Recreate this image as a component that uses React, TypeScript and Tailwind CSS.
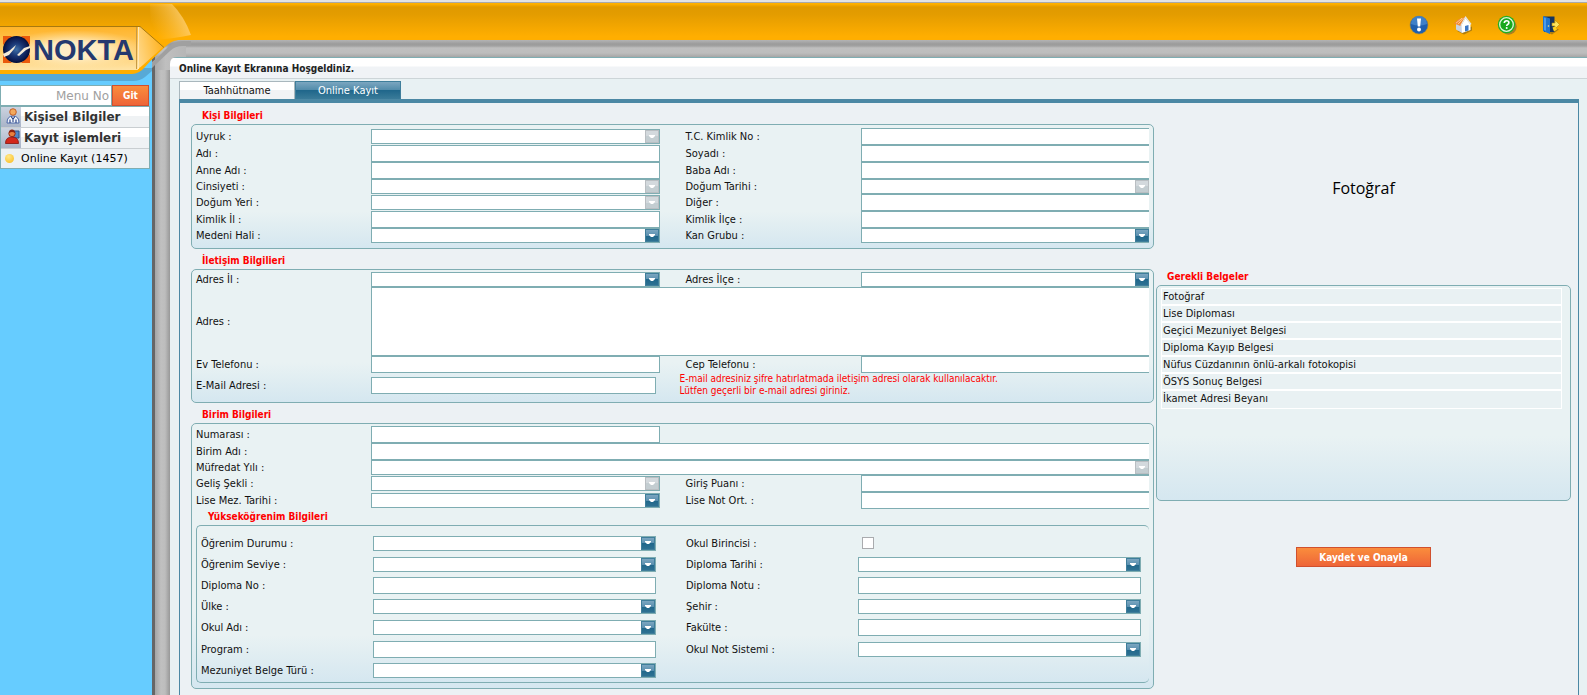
import type { ReactNode } from 'react';
import clsx from 'clsx';

type FieldKind = 'text' | 'select' | 'checkbox' | 'textarea';

interface FieldDef {
    id: string;
    label: string;
    kind?: FieldKind;
    disabled?: boolean;
    wide?: boolean;
}

const personFields: FieldDef[] = [
    { id: 'uyruk', label: 'Uyruk :', kind: 'select', disabled: true },
    { id: 'tc-kimlik', label: 'T.C. Kimlik No :' },
    { id: 'adi', label: 'Adı :' },
    { id: 'soyadi', label: 'Soyadı :' },
    { id: 'anne-adi', label: 'Anne Adı :' },
    { id: 'baba-adi', label: 'Baba Adı :' },
    { id: 'cinsiyet', label: 'Cinsiyeti :', kind: 'select', disabled: true },
    { id: 'dogum-tarihi', label: 'Doğum Tarihi :', kind: 'select', disabled: true },
    { id: 'dogum-yeri', label: 'Doğum Yeri :', kind: 'select', disabled: true },
    { id: 'diger', label: 'Diğer :' },
    { id: 'kimlik-il', label: 'Kimlik İl :' },
    { id: 'kimlik-ilce', label: 'Kimlik İlçe :' },
    { id: 'medeni-hali', label: 'Medeni Hali :', kind: 'select' },
    { id: 'kan-grubu', label: 'Kan Grubu :', kind: 'select' },
];

const contactFields: FieldDef[] = [
    { id: 'adres-il', label: 'Adres İl :', kind: 'select' },
    { id: 'adres-ilce', label: 'Adres İlçe :', kind: 'select' },
    { id: 'adres', label: 'Adres :', kind: 'textarea', wide: true },
    { id: 'ev-tel', label: 'Ev Telefonu :' },
    { id: 'cep-tel', label: 'Cep Telefonu :' },
];

const unitFields: FieldDef[] = [
    { id: 'birim-adi', label: 'Birim Adı :', wide: true },
    { id: 'mufredat', label: 'Müfredat Yılı :', kind: 'select', disabled: true, wide: true },
    { id: 'gelis', label: 'Geliş Şekli :', kind: 'select', disabled: true },
    { id: 'giris-puani', label: 'Giriş Puanı :' },
    { id: 'lise-mez', label: 'Lise Mez. Tarihi :', kind: 'select' },
    { id: 'lise-not', label: 'Lise Not Ort. :' },
];

const higherEdFields: FieldDef[] = [
    { id: 'ogrenim-durumu', label: 'Öğrenim Durumu :', kind: 'select' },
    { id: 'okul-birincisi', label: 'Okul Birincisi :', kind: 'checkbox' },
    { id: 'ogrenim-seviye', label: 'Öğrenim Seviye :', kind: 'select' },
    { id: 'diploma-tarihi', label: 'Diploma Tarihi :', kind: 'select' },
    { id: 'diploma-no', label: 'Diploma No :' },
    { id: 'diploma-notu', label: 'Diploma Notu :' },
    { id: 'ulke', label: 'Ülke :', kind: 'select' },
    { id: 'sehir', label: 'Şehir :', kind: 'select' },
    { id: 'okul-adi', label: 'Okul Adı :', kind: 'select' },
    { id: 'fakulte', label: 'Fakülte :' },
    { id: 'program', label: 'Program :' },
    { id: 'not-sistemi', label: 'Okul Not Sistemi :', kind: 'select' },
    { id: 'belge-turu', label: 'Mezuniyet Belge Türü :', kind: 'select' },
];

const requiredDocs = [
    'Fotoğraf',
    'Lise Diploması',
    'Geçici Mezuniyet Belgesi',
    'Diploma Kayıp Belgesi',
    'Nüfus Cüzdanının önlü-arkalı fotokopisi',
    'ÖSYS Sonuç Belgesi',
    'İkamet Adresi Beyanı',
];

const boxClass = 'rounded-[5px] border border-[#7fadb2] bg-[linear-gradient(to_bottom,#e9f2f3_70%,#d5e7f0)]';
const gridClass = 'grid grid-cols-[175px_1fr_201px_1fr] items-center';

const Control = ({ field, open }: { field: FieldDef; open?: boolean }) => {
    const { id, kind = 'text', disabled, wide } = field;
    const border = clsx('border border-[#7fadb2] bg-white', open && 'border-r-0');
    const span = wide && 'col-span-3';

    if (kind === 'checkbox') {
        return (
            <div className="flex h-[18px] items-center pl-1">
                <input id={id} type="checkbox" className="size-3 appearance-none border border-[#a9abae] bg-white checked:bg-[#2b6d8d]" />
            </div>
        );
    }
    if (kind === 'textarea') {
        return <textarea id={id} className={clsx('block h-[69px] w-full resize-none px-1 outline-none', border, span)} />;
    }
    if (kind === 'select') {
        return (
            <div className={clsx('relative h-[15px]', border, span)}>
                <select id={id} disabled={disabled} className="block h-full w-full appearance-none bg-transparent px-1 outline-none">
                    <option value=""></option>
                </select>
                <span
                    className={clsx(
                        'pointer-events-none absolute top-0 right-0 flex h-[13px] w-[14px] items-center justify-center border',
                        disabled
                            ? 'border-[#b9bec2] bg-[linear-gradient(to_bottom,#d3d9dd_50%,#c3cdd1_50%)]'
                            : 'border-[#3f7e9b] bg-[linear-gradient(to_bottom,#7ba6c0,#5b90b0_50%,#20678b_50%,#2e7192)]',
                    )}
                >
                    <svg width="6" height="4" viewBox="0 0 6 4"><path d="M0 0h6v1L4 3H2L0 1z" fill="#fff" /></svg>
                </span>
            </div>
        );
    }
    return <input id={id} type="text" className={clsx('h-[17px] w-full min-w-0 px-1 outline-none', border, span)} />;
};

const Fields = ({ fields, nested }: { fields: FieldDef[]; nested?: boolean }) => {
    let column = 0;
    return fields.map((field) => {
        const second = column === 1;
        column = field.wide ? 0 : (column + 1) % 2;
        return (
            <div key={field.id} className="contents">
                <label htmlFor={field.id} className={clsx('leading-[15px]', second && (nested ? 'pl-[30px]' : 'pl-[26px]'))}>
                    {field.label}
                </label>
                <Control field={field} open={!nested && (second || field.wide)} />
            </div>
        );
    });
};

const SectionTitle = ({ children }: { children: ReactNode }) => (
    <h2 className="h-5 pl-[11px] text-[10px] leading-[24px] font-bold text-[#ff0000]">{children}</h2>
);

const Logo = () => (
    <div className="absolute -top-[3px] left-0">
        <svg width="200" height="86" viewBox="0 0 200 86" className="block">
            <defs>
                <linearGradient id="plate" x1="0" y1="0" x2="0" y2="1">
                    <stop offset="0" stopColor="#ffb42a" />
                    <stop offset="0.5" stopColor="#ffc85e" />
                    <stop offset="1" stopColor="#ffe3a4" />
                </linearGradient>
                <radialGradient id="glow">
                    <stop offset="0.4" stopColor="#fff3d6" stopOpacity="0.85" />
                    <stop offset="1" stopColor="#ffe3a4" stopOpacity="0" />
                </radialGradient>
                <linearGradient id="arrow" x1="0" y1="0.6" x2="1" y2="0.3">
                    <stop offset="0" stopColor="#ffdf9c" />
                    <stop offset="1" stopColor="#ffb01a" />
                </linearGradient>
                <linearGradient id="flare" gradientUnits="userSpaceOnUse" x1="150" y1="30" x2="184" y2="14">
                    <stop offset="0.1" stopColor="#ffc34a" stopOpacity="0" />
                    <stop offset="1" stopColor="#ffd27a" stopOpacity="0.8" />
                </linearGradient>
                <linearGradient id="rail" x1="0" y1="0" x2="1" y2="0">
                    <stop offset="0" stopColor="#a4a4a4" />
                    <stop offset="0.4" stopColor="#bfbfbf" />
                    <stop offset="1" stopColor="#b6b6b6" />
                </linearGradient>
                <radialGradient id="globe">
                    <stop offset="0" stopColor="#3f70a8" />
                    <stop offset="0.45" stopColor="#1c3a78" />
                    <stop offset="0.85" stopColor="#0b1a50" />
                    <stop offset="1" stopColor="#050d33" />
                </radialGradient>
            </defs>
            <path d="M0 68h152v3l-7 6q-5 4-12 4H0z" fill="#57a9d6" />
            <path d="M152 62l22-18h12v13h-9q-7 0-7 7v6h-15v-6l-3 3z" fill="url(#rail)" />
            <path d="M152 63l14-14q7-8 17-8h8v5h-8q-8 0-13 5l-15 14-3 3z" fill="#a0a0a0" />
            <path d="M0 39h192v1h-14q-8 0-14 6l-19 21q-6 7-13 7H0z" fill="#ffae00" />
            <path d="M146 60l18-16q6-5 14-5v1q-7 1-13 7l-21 20z" fill="#ffae00" />
            <path d="M150 4h22q12 12 19 31-18 4-40 5z" fill="url(#flare)" />
            <path d="M0 27h138v43H0z" fill="url(#plate)" />
            <ellipse cx="74" cy="50" rx="74" ry="20" fill="url(#glow)" />
            <path d="M138 27h3l22 20-20 18q-5 5-11 5h6z" fill="url(#arrow)" />
            <path d="M0 26.500h140l24 21" fill="none" stroke="#a8790f" />
            <path d="M136.500 27v42" stroke="#c79a45" />
            <path d="M138.500 27v42" stroke="#ffe7b8" />
            <path d="M3 36h9l-9 9zM30 36h-9l9 9zM3 63h9l-9-9zM30 63h-9l9-9z" fill="#ea5a0c" />
            <circle cx="16.500" cy="49.500" r="13.500" fill="url(#globe)" />
            <path d="M3 54l6-3 7-6-2 4-5 6-5 2zM30 46l-6 2-7 7 2 1 7-6 4-2z" fill="#f3ead8" />
        </svg>
        <span className="absolute top-[32px] left-[33px] font-['Liberation_Sans',Arial,sans-serif] text-[29px] leading-[36px] font-bold text-[#25396f]">NOKTA</span>
    </div>
);

const InfoIcon = () => (
    <svg width="20" height="20" viewBox="0 0 20 20">
        <circle cx="10" cy="10" r="9" fill="#1f5fae" stroke="#9a8a4a" strokeWidth="0.600" />
        <path d="M2 9a8 8 0 0 1 16 0q-8 3-16 0z" fill="#3f80c8" />
        <path d="M8 3.500h4l-.8 8H8.800z" fill="#fff" />
        <circle cx="10" cy="14.500" r="2" fill="#fff" />
    </svg>
);

const HomeIcon = () => (
    <svg width="20" height="20" viewBox="0 0 20 20">
        <path d="M4 16l7 3.500 8-4v-4l-5 2z" fill="#8f6a14" opacity="0.7" />
        <path d="M3 8.500l6 2v7.500l-6-3.500z" fill="#c9d3e4" />
        <path d="M8.500 10l4-7 5 6.500v5.500l-8.500 3z" fill="#fff" />
        <path d="M1 8.500L5 4.500l7.500-3L7.500 11z" fill="#f08a34" />
        <path d="M3 8.200l6-5M5 9.200L10.500 3" stroke="#ffc890" strokeWidth="1" />
        <path d="M12.500 1l6 8-1 .8-5-6.500-4.200 7.700-1-.8z" fill="#e3e6ea" />
        <path d="M12 11l3.500-1v5.500L12 16.500z" fill="#3d78c4" />
    </svg>
);

const HelpIcon = () => (
    <svg width="20" height="20" viewBox="0 0 20 20">
        <circle cx="11.500" cy="11.500" r="8.200" fill="#96752a" opacity="0.8" />
        <circle cx="9.500" cy="9.500" r="8.700" fill="#22b125" />
        <circle cx="9.500" cy="9.500" r="6.800" fill="#1aa81e" stroke="#dff5d8" strokeWidth="1.300" />
        <path d="M7.300 8q0-2.300 2.300-2.300t2.300 2q0 1.200-1.300 1.800-.9.500-.9 1.500" fill="none" stroke="#fff" strokeWidth="1.600" />
        <circle cx="9.700" cy="13.100" r="1" fill="#fff" />
    </svg>
);

const ExitIcon = () => (
    <svg width="20" height="20" viewBox="0 0 20 20">
        <path d="M6 17l5 2.500 7-5-3-1z" fill="#8f6a14" opacity="0.7" />
        <path d="M3 1.500h10.500V17H3z" fill="#16345f" />
        <path d="M2 1l7 2.500V19l-7-3z" fill="#1f74cf" />
        <path d="M3 2.500l2 .7v12.500l-2-.8z" fill="#4d9cea" />
        <circle cx="7.500" cy="11" r="0.800" fill="#ffe27a" />
        <path d="M11 8h3V5l4.500 4.500L14 14v-3h-3z" fill="#ffe45c" stroke="#b28a08" strokeWidth="0.600" />
        <path d="M11.500 12.500l3-1 1.500 3-3 2z" fill="#ffd21c" />
    </svg>
);

const DoctorIcon = () => (
    <svg width="20" height="19" viewBox="0 0 20 19">
        <path d="M6 16q0-7 6-7t6 7z" fill="#f4f7fc" stroke="#4a66a8" />
        <circle cx="12" cy="5" r="3.300" fill="#f3a95c" stroke="#c0561d" strokeWidth="0.900" />
        <path d="M10 9.500l2 2.500 2-2.500M12 11v4M9 12.500V16M15 12.500V16" fill="none" stroke="#253f82" strokeWidth="1.100" />
    </svg>
);

const UserIcon = () => (
    <svg width="20" height="19" viewBox="0 0 20 19">
        <path d="M12 3h6v7h-6z" fill="#4f87c6" stroke="#2c5187" />
        <path d="M4.500 15.500q0-6.500 6.500-6.500t6.500 6.500z" fill="#d3271b" stroke="#86130c" strokeWidth="0.800" />
        <circle cx="11" cy="5.500" r="3.200" fill="#e9803c" stroke="#8d2311" strokeWidth="0.900" />
        <path d="M8 5q0-3.500 3-3.500T14 5q-3-2-6 0z" fill="#8d2311" />
    </svg>
);

const toolbar = [
    { label: 'Bilgi', icon: <InfoIcon /> },
    { label: 'Ana Sayfa', icon: <HomeIcon /> },
    { label: 'Yardım', icon: <HelpIcon /> },
    { label: 'Çıkış', icon: <ExitIcon /> },
];

const MenuGroup = ({ icon, children }: { icon: ReactNode; children: ReactNode }) => (
    <button type="button" className="flex h-[21px] w-full items-center gap-[3px] border-b border-[#c9ced1] bg-[linear-gradient(to_bottom,#fff_45%,#eff2f4_45%)] text-left text-[12px] font-bold text-[#333]">
        <span className="h-5 w-5 bg-[linear-gradient(to_bottom,#ccd3e0,#a9b4c8)]">{icon}</span>
        {children}
    </button>
);

const Sidebar = () => (
    <aside className="w-[152px] shrink-0 bg-[#66ccff] pt-[45px] font-['DejaVu_Sans',sans-serif]">
        <form className="flex h-[21px] w-[149px]" onSubmit={(e) => e.preventDefault()}>
            <input aria-label="Menu No" placeholder="Menu No" className="h-full w-0 flex-1 border border-[#7fadb2] bg-white px-[2px] text-right text-[12px] outline-none placeholder:text-[#a0a0a0]" />
            <button type="submit" className="w-[37px] border border-[#d0502e] bg-[linear-gradient(to_bottom,#fa8d3c,#ee6538)] font-['DejaVu_Sans_Condensed',sans-serif] text-[10px] font-bold text-white">Git</button>
        </form>
        <nav className="w-[150px] border border-[#7fadb2] bg-[#ecf1f4]">
            <MenuGroup icon={<DoctorIcon />}>Kişisel Bilgiler</MenuGroup>
            <MenuGroup icon={<UserIcon />}>Kayıt işlemleri</MenuGroup>
            <a href="#online-kayit" className="flex h-[19px] items-center gap-[7px] pl-1 text-[11px] text-black">
                <span className="size-[9px] rounded-full bg-[radial-gradient(circle_at_40%_30%,#ffe98a,#fbb917)]" />
                Online Kayıt (1457)
            </a>
        </nav>
    </aside>
);

const Header = () => (
    <header className="relative z-10 h-10 border-t-[3px] border-[#a9a9a9] bg-[linear-gradient(to_bottom,#ffb000_1px,#e09a00_4px,#e39c00_30%,#ffae00_90%)]">
        <div className="absolute inset-x-0 -top-[3px] h-[2px] bg-[#e2e3e6]" />
        <Logo />
        <div className="flex justify-end gap-6 pt-3 pr-[26px]">
            {toolbar.map((item) => (
                <button key={item.label} type="button" aria-label={item.label}>{item.icon}</button>
            ))}
        </div>
    </header>
);

const RequiredDocuments = () => (
    <section>
        <SectionTitle>Gerekli Belgeler</SectionTitle>
        <div className={clsx(boxClass, 'h-[216px] pt-[2px] pr-2 pl-1')}>
            <ul className="border border-white">
                {requiredDocs.map((doc) => (
                    <li key={doc} className="h-[17px] border-b-2 border-white bg-[#e9f1f3] pl-px leading-[16px] last:border-b-0">{doc}</li>
                ))}
            </ul>
        </div>
    </section>
);

const RegistrationForm = () => (
    <form className="min-w-0 flex-1" onSubmit={(e) => e.preventDefault()}>
        <SectionTitle>Kişi Bilgileri</SectionTitle>
        <div className={clsx(boxClass, gridClass, 'px-1 pt-[3px] pb-[5px]')}>
            <Fields fields={personFields} />
        </div>

        <SectionTitle>İletişim Bilgilieri</SectionTitle>
        <div className={clsx(boxClass, gridClass, 'px-1 pt-[2px] pb-[5px]')}>
            <Fields fields={contactFields} />
            <label htmlFor="email">E-Mail Adresi :</label>
            <input id="email" type="email" className="mr-1 h-[17px] border border-[#7fadb2] bg-white px-1 outline-none" />
            <p className="col-span-2 pl-5 text-[10px] leading-[12px] text-[#ff0000]">
                E-mail adresiniz şifre hatırlatmada iletişim adresi olarak kullanılacaktır.
                <br />
                Lütfen geçerli bir e-mail adresi giriniz.
            </p>
        </div>

        <SectionTitle>Birim Bilgileri</SectionTitle>
        <div className={clsx(boxClass, 'px-1 pt-[2px] pb-[5px]')}>
            <div className={gridClass}>
                <label htmlFor="numara">Numarası :</label>
                <input id="numara" className="h-[17px] border border-[#7fadb2] bg-white px-1 outline-none" />
                <span className="col-span-2" />
                <Fields fields={unitFields} />
            </div>
            <h3 className="h-4 pl-3 text-[10px] leading-[16px] font-bold text-[#ff0000]">Yükseköğrenim Bilgileri</h3>
            <div className={clsx(boxClass, 'grid grid-cols-[172px_1fr_202px_1fr] items-center gap-y-[5px] border-r-0 pt-2 pr-2 pb-1 pl-1')}>
                <Fields fields={higherEdFields} nested />
            </div>
        </div>
    </form>
);

export default function App() {
    return (
        <div className="flex min-h-screen flex-col font-['DejaVu_Sans_Condensed','DejaVu_Sans',sans-serif] text-[11px] leading-[15px] text-[#111]">
            <Header />
            <div className="flex flex-1">
                <Sidebar />
                <div className="flex min-w-0 flex-1 flex-col border-l-[3px] border-[#666] bg-[linear-gradient(to_right,#a4a4a4,#c0c0c0_6px,#bdbdbd_10px,#989898_15px)]">
                    <div className="h-[17px] bg-[linear-gradient(to_bottom,#b4b4b4,#9b9b9b_4px,#a2a2a2_6px,#bfbfbf_8px,#bdbdbd_13px,#a6a6a6)]" />
                    <main className="ml-[15px] flex flex-1 flex-col border-t border-[#7fadb2] bg-[#e8f1f3]">
                        <h1 className="h-[21px] border-b border-[#cdd5d8] bg-[linear-gradient(to_bottom,#fff_40%,#f0f3f6_45%)] pl-[9px] text-[10px] leading-[22px] font-bold text-[#222]">
                            Online Kayıt Ekranına Hoşgeldiniz.
                        </h1>
                        <div role="tablist" className="mt-[2px] ml-[9px] flex h-[18px]">
                            <button role="tab" aria-selected="false" type="button" className="w-[116px] border border-b-0 border-[#a9b7bd] bg-[linear-gradient(to_bottom,#fff_50%,#f1f3f5_50%)]">Taahhütname</button>
                            <button role="tab" aria-selected="true" type="button" className="w-[106px] border border-b-0 border-[#3f7e9b] bg-[linear-gradient(to_bottom,#7ba6c0,#4f8aa9_50%,#20678b_50%,#3a7b99)] text-white">Online Kayıt</button>
                        </div>
                        <div className="mr-2 ml-[9px] flex flex-1 gap-[2px] border-x border-t-4 border-[#4b88a4] bg-[#ecf1f4] pt-px pr-[7px] pb-1 pl-[11px]">
                            <RegistrationForm />
                            <div className="flex w-[415px] shrink-0 flex-col">
                                <div className="flex h-[161px] items-end justify-center pb-[66px] font-['Open_Sans',sans-serif] text-[16px] leading-[22px] text-black">Fotoğraf</div>
                                <RequiredDocuments />
                                <button type="button" className="mt-[46px] h-5 w-[135px] self-center border border-[#d0502e] bg-[linear-gradient(to_bottom,#fa8d3c,#ee6538)] text-[10px] font-bold text-white">
                                    Kaydet ve Onayla
                                </button>
                            </div>
                        </div>
                    </main>
                </div>
            </div>
        </div>
    );
}
